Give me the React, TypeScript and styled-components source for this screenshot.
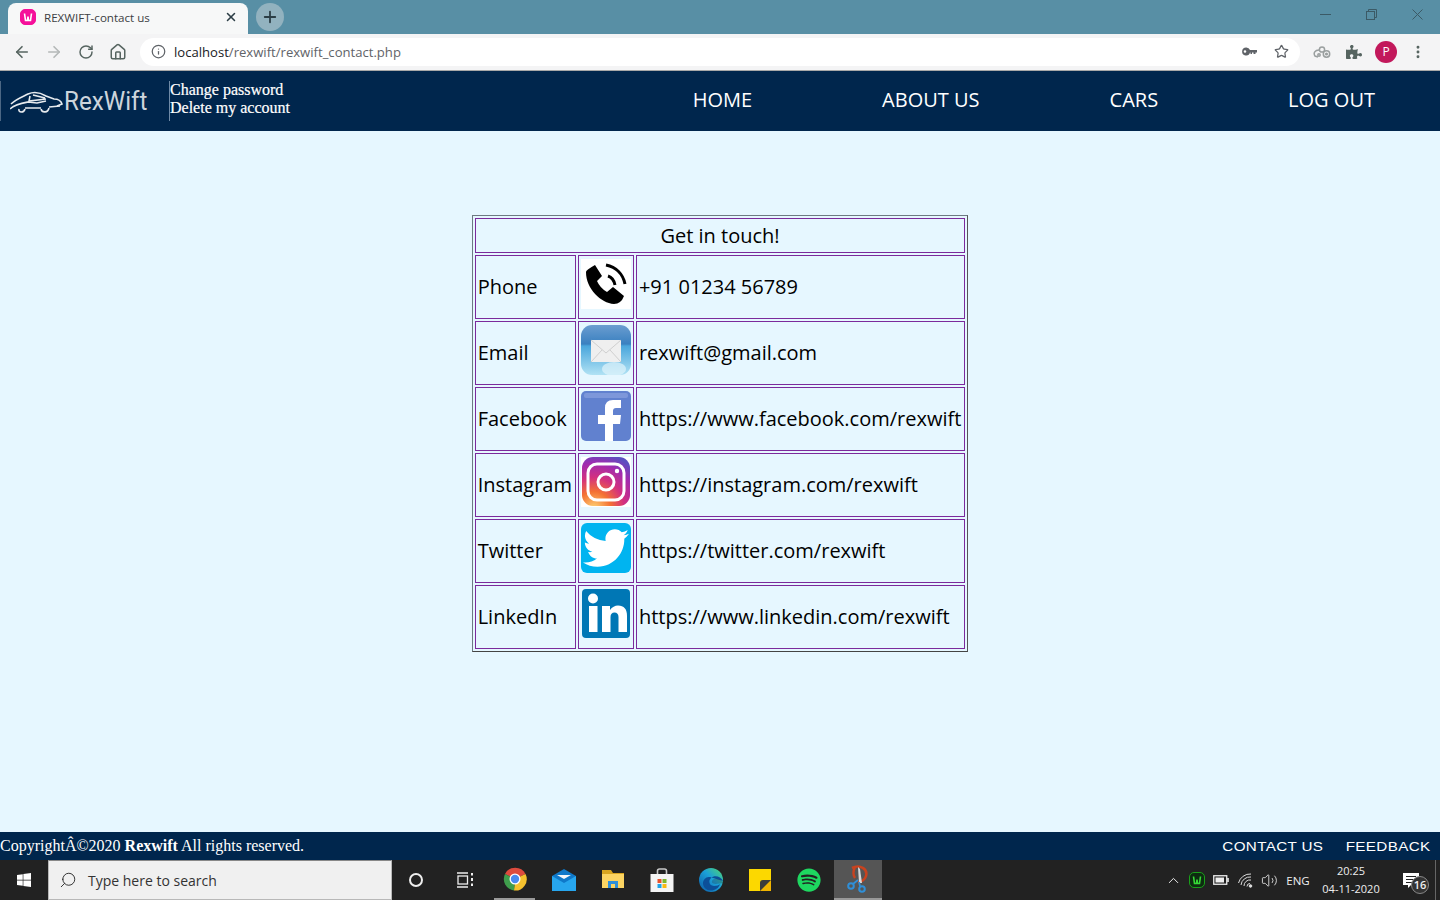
import React from 'react';
import styled, { createGlobalStyle } from 'styled-components';
import { FaTwitter, FaSpotify, FaWindows, FaPuzzlePiece } from 'react-icons/fa';
import { ArrowLeft, ArrowRight, RotateCw, Home, Info, Star, X, Plus, Search, ChevronUp, Volume2, MoreVertical } from 'lucide-react';

const GlobalStyle = createGlobalStyle`
  html, body { margin: 0; padding: 0; height: 100%; overflow: hidden; }
  body { font-family: "Open Sans", sans-serif; background: #e6f7ff; }
`;

const Page = styled.div`
  display: flex;
  flex-direction: column;
  height: 900px;
  width: 1440px;
`;

/* browser chrome */
const TabStrip = styled.div`
  display: flex;
  align-items: flex-end;
  height: 34px;
  padding-left: 8px;
  background: #588fa5;
`;

const Tab = styled.div`
  display: flex;
  align-items: center;
  width: 240px;
  height: 31px;
  box-sizing: border-box;
  padding: 0 10px 3px 12px;
  background: #f7f8f8;
  border-radius: 8px 8px 0 0;
  font-size: 11.6px;
  color: #3c4043;
`;

const TabTitle = styled.span`
  flex: 1;
  margin-left: 8px;
`;

const NewTab = styled.div`
  display: flex;
  align-items: center;
  justify-content: center;
  align-self: center;
  width: 28px;
  height: 28px;
  margin-left: 8px;
  border-radius: 50%;
  background: #92b2bf;
  color: #2c3e46;
`;

const WindowControls = styled.div`
  display: flex;
  align-self: flex-start;
  margin-left: auto;
`;

const WindowButton = styled.div`
  display: flex;
  align-items: center;
  justify-content: center;
  width: 46px;
  height: 28px;
  color: #3b5a66;
`;

const Toolbar = styled.div`
  display: flex;
  align-items: center;
  height: 37px;
  box-sizing: border-box;
  padding: 0 6px 1px;
  background: #f4f4f5;
  border-bottom: 1px solid #a9a9a9;
`;

const ToolButton = styled.div<{ $muted?: boolean }>`
  display: flex;
  align-items: center;
  justify-content: center;
  width: 32px;
  height: 32px;
  color: ${({ $muted }) => ($muted ? '#b4b8b8' : '#566460')};
`;

const AddressBar = styled.div`
  flex: 1;
  display: flex;
  align-items: center;
  height: 28px;
  margin: 0 6px;
  padding: 0 11px;
  background: #fff;
  border-radius: 14px;
  font-size: 13.1px;
  color: #5f6368;
`;

const Host = styled.span`
  margin-left: 8px;
  color: #202124;
`;

const AddressEnd = styled.div`
  display: flex;
  align-items: center;
  gap: 17px;
  margin-left: auto;
  color: #5f6368;
`;

const Avatar = styled.div`
  display: flex;
  align-items: center;
  justify-content: center;
  width: 22px;
  height: 22px;
  border-radius: 50%;
  background: #c2185b;
  color: #fff;
  font-size: 12px;
`;

/* site header */
const Header = styled.header`
  display: flex;
  align-items: center;
  height: 60px;
  background: #00264d;
  color: #fff;
`;

const Brand = styled.div`
  display: flex;
  align-items: center;
  width: 170px;
  height: 40px;
  box-sizing: border-box;
  padding-left: 9px;
  border-left: 1px solid #4c6784;
  border-right: 1px solid #6f8aa6;
`;

const BrandName = styled.span`
  font-family: Roboto, sans-serif;
  font-weight: 400;
  font-size: 26px;
  color: #cdd5dc;
  transform: scaleX(0.93);
  transform-origin: left center;
`;

const AccountLinks = styled.div`
  display: flex;
  flex-direction: column;
  padding-bottom: 4px;
  font-family: "Liberation Serif", serif;
  font-size: 16px;
  line-height: 18px;
  -webkit-text-stroke: 0.2px #fff;
`;

const NavLinks = styled.nav`
  display: flex;
  margin-left: auto;
  padding-bottom: 4px;
`;

const NavLink = styled.a`
  padding: 0 65px;
  font-size: 20px;
  color: #fff;
`;

/* content */
const Main = styled.main`
  flex: 1;
  display: flex;
  justify-content: center;
  align-items: flex-start;
  padding-top: 84px;
  background: #e6f7ff;
`;

const ContactTable = styled.table`
  border: 1px solid #6d7a82;
  border-right-color: #555;
  border-bottom-color: #444;
  border-spacing: 2px;
  border-collapse: separate;
  font-size: 20px;
  color: #000;
`;

const Cell = styled.td`
  border: 1px solid #7b2a9c;
  padding: 1px 3px 3px 2px;
  line-height: 27px;
  white-space: nowrap;
`;

const TitleCell = styled(Cell)`
  text-align: center;
  padding: 3px 2px;
  line-height: 27px;
`;

const IconCell = styled(Cell)`
  padding: 3px 2px 9px;
  line-height: 0;
`;

const TwitterTile = styled.div`
  display: flex;
  align-items: center;
  justify-content: center;
  width: 50px;
  height: 50px;
  border-radius: 6px;
  background: #00b4f0;
  color: #fff;
`;

/* site footer */
const Footer = styled.footer`
  display: flex;
  align-items: center;
  height: 28px;
  background: #00264d;
  color: #fff;
  font-family: "Liberation Serif", serif;
  font-size: 16px;
`;

const FooterLinks = styled.div`
  display: flex;
  gap: 34px;
  margin-left: auto;
  padding-right: 10px;
  font-family: "Liberation Sans", sans-serif;
  font-size: 13px;
  letter-spacing: 0.3px;
`;

const FooterLink = styled.a`
  transform: scaleX(1.17);
  transform-origin: right center;
`;

/* windows taskbar */
const Taskbar = styled.div`
  display: flex;
  align-items: stretch;
  height: 40px;
  background: #222;
  color: #eee;
`;

const StartButton = styled.div`
  display: flex;
  align-items: center;
  justify-content: center;
  width: 48px;
`;

const SearchBox = styled.div`
  display: flex;
  align-items: center;
  gap: 11px;
  width: 344px;
  box-sizing: border-box;
  padding-left: 10px;
  background: #f0f0f0;
  border: 1px solid #b8b8b8;
  border-top-color: #888;
  font-size: 14px;
  color: #333;
`;

const SearchGlass = styled.span`
  display: flex;
  transform: scaleX(-1);
`;

const TaskSlot = styled.div<{ $width?: number }>`
  display: flex;
  align-items: center;
  justify-content: center;
  width: ${({ $width }) => $width ?? 49}px;
`;

const RunningSlot = styled(TaskSlot)`
  box-sizing: border-box;
  width: 41px;
  margin: 0 4px;
  border-bottom: 2px solid #9a9a9a;
`;

const ActiveSlot = styled(TaskSlot)`
  box-sizing: border-box;
  width: 48px;
  margin-left: 1px;
  background: #555;
  border-bottom: 2px solid #999;
`;

const Cortana = styled.div`
  width: 10px;
  height: 10px;
  border: 2px solid #eee;
  border-radius: 50%;
`;

const Tray = styled.div`
  display: flex;
  align-items: center;
  margin-left: auto;
  padding-right: 4px;
  font-size: 11.5px;
`;

const TrayItem = styled.div<{ $width: number }>`
  display: flex;
  align-items: center;
  justify-content: center;
  width: ${({ $width }) => $width}px;
`;

const Clock = styled.div`
  display: flex;
  flex-direction: column;
  align-items: center;
  width: 70px;
  font-size: 11px;
  line-height: 18px;
`;

const Notifications = styled.div`
  position: relative;
  display: flex;
  align-items: center;
  justify-content: center;
  width: 49px;
  height: 40px;
`;

const NotifBadge = styled.span`
  position: absolute;
  left: 25px;
  top: 16px;
  width: 16px;
  height: 16px;
  border: 1px solid #888;
  border-radius: 50%;
  background: #333;
  font-size: 11px;
  line-height: 16px;
  font-weight: 600;
  text-align: center;
  color: #eee;
`;

const DesktopEdge = styled.div`
  align-self: stretch;
  width: 1px;
  background: #666;
`;

/* drawings */
const WampIcon = ({ size, bg, fg, edge }: { size: number; bg: string; fg: string; edge?: string }) => (
  <svg width={size} height={size} viewBox="0 0 16 16">
    <rect x="0.5" y="0.5" width="15" height="15" rx="4.5" fill={bg} stroke={edge ?? bg} />
    <path d="M4.5 4.5 L5.5 11.5 H7.5 L8 7.5 L8.5 11.5 H10.5 L11.5 4.5" fill="none" stroke={fg} strokeWidth="1.6" />
  </svg>
);

const RestoreGlyph = () => (
  <svg width="11" height="11" viewBox="0 0 11 11" fill="none" stroke="#3b5a66">
    <rect x="0.5" y="2.5" width="8" height="8" />
    <path d="M2.5 2.5 V0.5 H10.5 V8.5 H8.5" />
  </svg>
);

const MinimiseGlyph = () => (
  <svg width="11" height="11" viewBox="0 0 11 11" stroke="#3b5a66">
    <path d="M0 5.5 H11" />
  </svg>
);

const CloseGlyph = () => (
  <svg width="11" height="11" viewBox="0 0 11 11" stroke="#3b5a66">
    <path d="M0.5 0.5 L10.5 10.5 M10.5 0.5 L0.5 10.5" />
  </svg>
);

const KeyGlyph = () => (
  <svg width="15" height="9" viewBox="0 0 15 9" fill="#5f6368">
    <path d="M4.2 0.5 A4 4 0 0 1 8 3 H15 V5.5 H13.5 V7 H11.5 V5.5 H10 V7 H8.5 V5.5 H8 A4 4 0 1 1 4.2 0.5 Z M3 3.2 A1.3 1.3 0 1 0 3 5.8 A1.3 1.3 0 1 0 3 3.2 Z" fillRule="evenodd" />
  </svg>
);

const CarLogo = () => (
  <svg width="54" height="24" viewBox="0 0 54 24" fill="none" stroke="#e6eaee" strokeWidth="1.6">
    <path d="M1 15 C6 10 12 8 18 5 C25 2 31 4 36 7 L44 10 C48 10 51 12 52 15 L47 17" />
    <path d="M0 20 C5 15 12 14 18 13 L27 14 L36 12" />
    <path d="M9 20 C8 24 14 24 15 20 M31 20 C32 24 38 24 39 19" />
    <path d="M15 19 L31 19 M39 18 L50 17" />
    <path d="M20 7 L19 12 L36 10 M23 6 L35 9" />
  </svg>
);

const PhoneTile = () => (
  <svg width="50" height="50" viewBox="0 0 50 50">
    <rect width="50" height="50" fill="#fff" />
    <path d="M5 13 Q5 11 14 6 L21 17 L16 22 Q19 29 26 33 L32 28 L43 37 Q40 45 33 45 C20 44 5 30 5 13 Z" fill="#000" />
    <path d="M25 6 C35 8 42 15 44 25" fill="none" stroke="#000" strokeWidth="3" />
    <path d="M27 17 C30 18 33 21 34 26" fill="none" stroke="#000" strokeWidth="3" />
  </svg>
);

const MailTile = () => (
  <svg width="50" height="50" viewBox="0 0 50 50">
    <defs>
      <linearGradient id="mailBg" x1="0" y1="0" x2="0" y2="1">
        <stop offset="0" stopColor="#6a9dd0" />
        <stop offset="0.38" stopColor="#3a80c0" />
        <stop offset="0.42" stopColor="#4aa6dc" />
        <stop offset="1" stopColor="#b0e2f4" />
      </linearGradient>
    </defs>
    <rect width="50" height="50" rx="11" fill="url(#mailBg)" />
    <ellipse cx="33" cy="44" rx="12" ry="7" fill="#dff3fb" opacity="0.7" />
    <rect x="10" y="15" width="30" height="22" fill="#efefef" />
    <path d="M10 15 L25 28 L40 15 M10 37 L21 25 M40 37 L29 25" fill="none" stroke="#cfcfcf" strokeWidth="1" />
  </svg>
);

const FacebookTile = () => (
  <svg width="50" height="50" viewBox="0 0 50 50">
    <rect width="50" height="50" rx="5" fill="#6181cf" />
    <rect x="3" y="2" width="44" height="5" rx="2" fill="#7d97da" />
    <path d="M24 50 V33 H17 V24 H24 V17 Q24 9 32 9 H40 V17 H35 Q32 17 32 20 V24 H40 L39 33 H32 V50 Z" fill="#fff" />
  </svg>
);

const InstagramTile = () => (
  <svg width="50" height="50" viewBox="0 0 50 50">
    <defs>
      <radialGradient id="igBg" cx="0.25" cy="1.05" r="1.15">
        <stop offset="0" stopColor="#fed576" />
        <stop offset="0.3" stopColor="#f47133" />
        <stop offset="0.55" stopColor="#d3307f" />
        <stop offset="0.8" stopColor="#a02bb0" />
        <stop offset="1" stopColor="#5b4fc0" />
      </radialGradient>
    </defs>
    <rect width="50" height="50" fill="#fff" />
    <rect x="1" y="0" width="48" height="49" rx="11" fill="url(#igBg)" />
    <rect x="7" y="7" width="36" height="36" rx="9" fill="none" stroke="#fff" strokeWidth="3" />
    <circle cx="25" cy="25" r="8" fill="none" stroke="#fff" strokeWidth="3" />
    <circle cx="36" cy="14" r="2.2" fill="#fff" />
  </svg>
);

const LinkedinTile = () => (
  <svg width="50" height="50" viewBox="0 0 50 50">
    <rect x="1" y="0" width="48" height="49" rx="4" fill="#0077b5" />
    <circle cx="12" cy="9.5" r="5" fill="#fff" />
    <rect x="8" y="17" width="8.5" height="26" fill="#fff" />
    <path d="M21 17 H29 V21 C31 18 34 16.5 37 16.5 C43 16.5 46 20 46 27 V43 H37.5 V28 C37.5 25 36 23.5 33.5 23.5 C31 23.5 29.5 25 29.5 28 V43 H21 Z" fill="#fff" />
  </svg>
);

const ChromeIcon = () => (
  <svg width="24" height="24" viewBox="0 0 24 24">
    <path d="M12 12 L2 7 A11.5 11.5 0 0 1 22.5 7 Z" fill="#dd4b3e" />
    <path d="M12 12 L22.5 7 A11.5 11.5 0 0 1 11 23.5 Z" fill="#f5c12e" />
    <path d="M12 12 L11 23.5 A11.5 11.5 0 0 1 2 7 Z" fill="#3f9d4c" />
    <circle cx="12" cy="12" r="5.5" fill="#fff" />
    <circle cx="12" cy="12" r="4.2" fill="#4a8af0" />
  </svg>
);

const MailIcon = () => (
  <svg width="24" height="22" viewBox="0 0 24 22">
    <path d="M0 7 L12 0 L24 7 V22 H0 Z" fill="#0f78c9" />
    <path d="M0 7 L12 14 L24 7 V22 H0 Z" fill="#27a6ee" />
    <path d="M5 6 H19 L12 10 Z" fill="#f2f6fa" />
  </svg>
);

const FolderIcon = () => (
  <svg width="22" height="20" viewBox="0 0 22 20">
    <path d="M0 0 H9 L11 3 H22 V18 H0 Z" fill="#d9a520" />
    <rect y="4" width="22" height="14" fill="#fcd462" />
    <path d="M6 18 V11 H16 V18 H13 V14 H9 V18 Z" fill="#2f8fd8" />
  </svg>
);

const StoreIcon = () => (
  <svg width="24" height="24" viewBox="0 0 24 24">
    <path d="M7.5 7 V3 Q7.5 1 9.5 1 H14.5 Q16.5 1 16.5 3 V7" fill="none" stroke="#c9c9c9" strokeWidth="1.6" />
    <path d="M0.5 6 H23.5 V24 H0.5 Z" fill="#f4f4f4" />
    <rect x="7.5" y="11" width="4" height="4" fill="#e8502a" />
    <rect x="12.5" y="11" width="4" height="4" fill="#7cb82f" />
    <rect x="7.5" y="16" width="4" height="4" fill="#1ea3e8" />
    <rect x="12.5" y="16" width="4" height="4" fill="#fcb813" />
  </svg>
);

const EdgeIcon = () => (
  <svg width="24" height="24" viewBox="0 0 24 24">
    <defs>
      <linearGradient id="edgeBg" x1="0" y1="1" x2="1" y2="0">
        <stop offset="0" stopColor="#0c59a4" />
        <stop offset="0.55" stopColor="#1ba0d8" />
        <stop offset="1" stopColor="#50d86e" />
      </linearGradient>
    </defs>
    <circle cx="12" cy="12" r="12" fill="url(#edgeBg)" />
    <path d="M24 13 C22 8 15 7 12 10 C9 13 10 18 15 18 C18 18 20 17 21 16 C19 23 9 25 5 19 C2 14 6 8 11 9 L24 13 Z" fill="#0c4f98" />
    <path d="M24 14 C20 10 14 10 13 13 C12 15 15 16 17 16 L24 15 Z" fill="#222" opacity="0.25" />
  </svg>
);

const NotesIcon = () => (
  <svg width="22" height="22" viewBox="0 0 22 22">
    <rect width="22" height="22" fill="#fcd800" />
    <path d="M11 22 V16 Q11 11 16 11 H22 V22 Z" fill="#f0b400" />
    <path d="M11 22 L22 11 H14 Q11 11 11 14 Z" fill="#3b3b3b" />
  </svg>
);

const SnipIcon = () => (
  <svg width="24" height="28" viewBox="0 0 24 28" fill="none">
    <path d="M6 3 C14 -1 22 4 20 11 C19 15 15 17 12 17" stroke="#c8431f" strokeWidth="2.6" />
    <path d="M9 2 C7 6 7 10 9 13" stroke="#c8431f" strokeWidth="2.4" />
    <path d="M12 2 L13 18 L16 18 L14 4 Z" fill="#d8d8d8" />
    <circle cx="5" cy="21" r="2.8" stroke="#2f8fd8" strokeWidth="2" />
    <circle cx="16" cy="24" r="2.8" stroke="#2f8fd8" strokeWidth="2" />
    <path d="M7 19 L12 15 M14 21 L13 17" stroke="#2f8fd8" strokeWidth="1.8" />
  </svg>
);

const TaskViewIcon = () => (
  <svg width="18" height="16" viewBox="0 0 18 16" fill="none" stroke="#eee" strokeWidth="1.3">
    <path d="M1 1 H12 M1 15 H12" />
    <rect x="2" y="4" width="9.5" height="8" />
    <path d="M16 1 V3.5 M16 6 V9 M16 11.5 V14" strokeWidth="2" />
  </svg>
);

const CloudCogsIcon = () => (
  <svg width="18" height="14" viewBox="0 0 18 14" fill="none" stroke="#9a9f9f" strokeWidth="1.5">
    <circle cx="9" cy="4.5" r="2.6" />
    <path d="M6 5 C2 5 0 8 2 11 L5 12" />
    <circle cx="13.5" cy="9" r="3.2" />
    <circle cx="13.5" cy="9" r="0.8" fill="#9a9f9f" />
    <circle cx="6" cy="10" r="1.2" />
  </svg>
);

const BatteryIcon = () => (
  <svg width="16" height="10" viewBox="0 0 16 10">
    <rect x="0.75" y="0.75" width="13" height="8.5" fill="none" stroke="#eee" strokeWidth="1.3" />
    <rect x="2.5" y="2.5" width="8.5" height="5" fill="#eee" />
    <rect x="14.2" y="3" width="1.6" height="4" fill="#eee" />
  </svg>
);

const WifiIcon = () => (
  <svg width="15" height="15" viewBox="0 0 15 15" fill="none" stroke="#ddd" strokeWidth="1">
    <path d="M0.5 10 A12 12 0 0 1 13 1" />
    <path d="M3 12 A9 9 0 0 1 13 4" />
    <path d="M6 13 A6 6 0 0 1 13 7" />
    <path d="M9 13.5 A3 3 0 0 1 12 10.5" />
    <circle cx="12.5" cy="13" r="1.3" fill="#ddd" />
  </svg>
);

const NotifIcon = () => (
  <svg width="16" height="15" viewBox="0 0 16 15">
    <path d="M0 0 H16 V12 H8 L5 15 V12 H0 Z" fill="#fff" />
    <path d="M3 3.5 H13 M3 6.5 H13 M3 9.5 H10" stroke="#222" strokeWidth="1" />
  </svg>
);

const contacts = [
  { label: 'Phone', value: '+91 01234 56789', icon: <PhoneTile /> },
  { label: 'Email', value: 'rexwift@gmail.com', icon: <MailTile /> },
  { label: 'Facebook', value: 'https://www.facebook.com/rexwift', icon: <FacebookTile /> },
  { label: 'Instagram', value: 'https://instagram.com/rexwift', icon: <InstagramTile /> },
  { label: 'Twitter', value: 'https://twitter.com/rexwift', icon: <TwitterTile><FaTwitter size={46} /></TwitterTile> },
  { label: 'LinkedIn', value: 'https://www.linkedin.com/rexwift', icon: <LinkedinTile /> },
];

const App = () => {
  return (
    <Page>
      <GlobalStyle />
      <TabStrip>
        <Tab>
          <WampIcon size={16} bg="#f5109a" fg="#fff" />
          <TabTitle>REXWIFT-contact us</TabTitle>
          <X size={14} strokeWidth={2.6} color="#2c3e46" />
        </Tab>
        <NewTab><Plus size={18} strokeWidth={2.4} /></NewTab>
        <WindowControls>
          <WindowButton><MinimiseGlyph /></WindowButton>
          <WindowButton><RestoreGlyph /></WindowButton>
          <WindowButton><CloseGlyph /></WindowButton>
        </WindowControls>
      </TabStrip>

      <Toolbar>
        <ToolButton><ArrowLeft size={18} strokeWidth={2.2} /></ToolButton>
        <ToolButton $muted><ArrowRight size={18} strokeWidth={2.2} /></ToolButton>
        <ToolButton><RotateCw size={16} strokeWidth={2.2} /></ToolButton>
        <ToolButton><Home size={18} strokeWidth={2} /></ToolButton>
        <AddressBar>
          <Info size={15} strokeWidth={2} />
          <Host>localhost</Host>/rexwift/rexwift_contact.php
          <AddressEnd>
            <KeyGlyph />
            <Star size={15} strokeWidth={2} />
          </AddressEnd>
        </AddressBar>
        <ToolButton><CloudCogsIcon /></ToolButton>
        <ToolButton><FaPuzzlePiece size={16} /></ToolButton>
        <ToolButton><Avatar>P</Avatar></ToolButton>
        <ToolButton><MoreVertical size={16} strokeWidth={2.4} /></ToolButton>
      </Toolbar>

      <Header>
        <Brand>
          <CarLogo />
          <BrandName>RexWift</BrandName>
        </Brand>
        <AccountLinks>
          <a>Change password</a>
          <a>Delete my account</a>
        </AccountLinks>
        <NavLinks>
          <NavLink>HOME</NavLink>
          <NavLink>ABOUT US</NavLink>
          <NavLink>CARS</NavLink>
          <NavLink>LOG OUT</NavLink>
        </NavLinks>
      </Header>

      <Main>
        <ContactTable>
          <tbody>
            <tr>
              <TitleCell colSpan={3}>Get in touch!</TitleCell>
            </tr>
            {contacts.map((c) => (
              <tr key={c.label}>
                <Cell>{c.label}</Cell>
                <IconCell>{c.icon}</IconCell>
                <Cell>{c.value}</Cell>
              </tr>
            ))}
          </tbody>
        </ContactTable>
      </Main>

      <Footer>
        <span>CopyrightÂ©2020 <b>Rexwift</b> All rights reserved.</span>
        <FooterLinks>
          <FooterLink>CONTACT US</FooterLink>
          <FooterLink>FEEDBACK</FooterLink>
        </FooterLinks>
      </Footer>

      <Taskbar>
        <StartButton><FaWindows size={16} color="#fff" /></StartButton>
        <SearchBox>
          <SearchGlass><Search size={18} strokeWidth={1.2} color="#222" /></SearchGlass>
          Type here to search
        </SearchBox>
        <TaskSlot $width={48}><Cortana /></TaskSlot>
        <TaskSlot $width={50}><TaskViewIcon /></TaskSlot>
        <RunningSlot><ChromeIcon /></RunningSlot>
        <TaskSlot><MailIcon /></TaskSlot>
        <TaskSlot><FolderIcon /></TaskSlot>
        <TaskSlot><StoreIcon /></TaskSlot>
        <TaskSlot><EdgeIcon /></TaskSlot>
        <TaskSlot><NotesIcon /></TaskSlot>
        <TaskSlot><FaSpotify size={24} color="#1ed760" /></TaskSlot>
        <ActiveSlot><SnipIcon /></ActiveSlot>
        <Tray>
          <TrayItem $width={24}><ChevronUp size={17} strokeWidth={1.4} /></TrayItem>
          <TrayItem $width={24}><WampIcon size={16} bg="#0d2b10" fg="#36d936" edge="#1aa01a" /></TrayItem>
          <TrayItem $width={24}><BatteryIcon /></TrayItem>
          <TrayItem $width={25}><WifiIcon /></TrayItem>
          <TrayItem $width={22}><Volume2 size={17} strokeWidth={1.2} /></TrayItem>
          <TrayItem $width={36}>ENG</TrayItem>
          <Clock>
            <span>20:25</span>
            <span>04-11-2020</span>
          </Clock>
          <Notifications>
            <NotifIcon />
            <NotifBadge>16</NotifBadge>
          </Notifications>
          <DesktopEdge />
        </Tray>
      </Taskbar>
    </Page>
  );
};

export default App;
